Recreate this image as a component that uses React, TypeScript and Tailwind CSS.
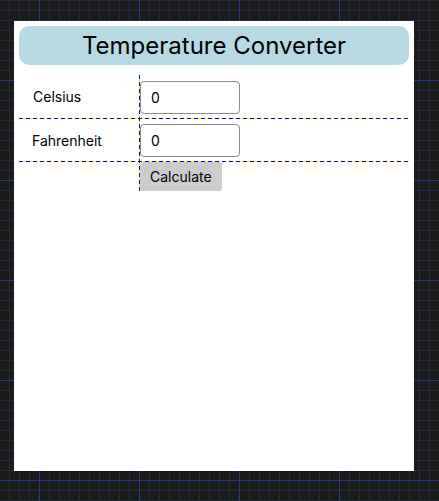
import React from "react";

export default function App() {
  return (
    <div
      className="w-[439px] h-[501px] overflow-hidden bg-[#1a1a1a] bg-[linear-gradient(to_right,#203a86_1px,transparent_1px),linear-gradient(to_bottom,#203a86_1px,transparent_1px),linear-gradient(to_right,#242a3c_1px,transparent_1px),linear-gradient(to_bottom,#242a3c_1px,transparent_1px)] bg-[size:100px_100px,100px_100px,10px_10px,10px_10px] bg-[position:39px_0px,0px_80px,9px_0px,0px_0px] pt-[21px] pl-[14px]"
      style={{ fontFamily: "Inter, 'Noto Sans', sans-serif" }}
    >
      <div className="w-[400px] h-[450px] bg-white p-[5px]">
        <div className="h-[39px] rounded-[10px] bg-[#b7d9e4] flex items-center justify-center text-[24px] text-black leading-none">
          Temperature Converter
        </div>
        <div className="relative mt-[10px] w-[390px] flex flex-col text-[14px] text-black">
          <div className="flex h-[43px]">
            <div className="w-[120px] flex items-center pl-[14px]">Celsius</div>
            <div className="pl-px">
              <input
                readOnly
                value="0"
                className="mt-[6px] w-[100px] h-[33px] rounded-[4px] border border-[#8c8c8c] px-[10px] text-[14px] outline-none"
              />
            </div>
          </div>
          <div className="h-px w-full bg-[repeating-linear-gradient(90deg,#0000ff_0px,#0000ff_4px,#ffff00_4px,#ffff00_7px)]" />
          <div className="flex h-[42px]">
            <div className="w-[120px] flex items-center pl-[13px]">Fahrenheit</div>
            <div className="pl-px">
              <input
                readOnly
                value="0"
                className="mt-[5px] w-[100px] h-[33px] rounded-[4px] border border-[#8c8c8c] px-[10px] text-[14px] outline-none"
              />
            </div>
          </div>
          <div className="h-px w-full bg-[repeating-linear-gradient(90deg,#0000ff_0px,#0000ff_4px,#ffff00_4px,#ffff00_7px)]" />
          <div className="flex h-[30px]">
            <div className="w-[120px]" />
            <div className="pl-px">
              <button className="h-[29px] px-[10px] rounded-[3px] bg-[#cccccc] text-[14px] text-black">
                Calculate
              </button>
            </div>
          </div>
          <div className="absolute left-[120px] top-0 bottom-0 w-px bg-[repeating-linear-gradient(180deg,#0000ff_0px,#0000ff_4px,#ffff00_4px,#ffff00_7px)]" />
        </div>
      </div>
    </div>
  );
}
